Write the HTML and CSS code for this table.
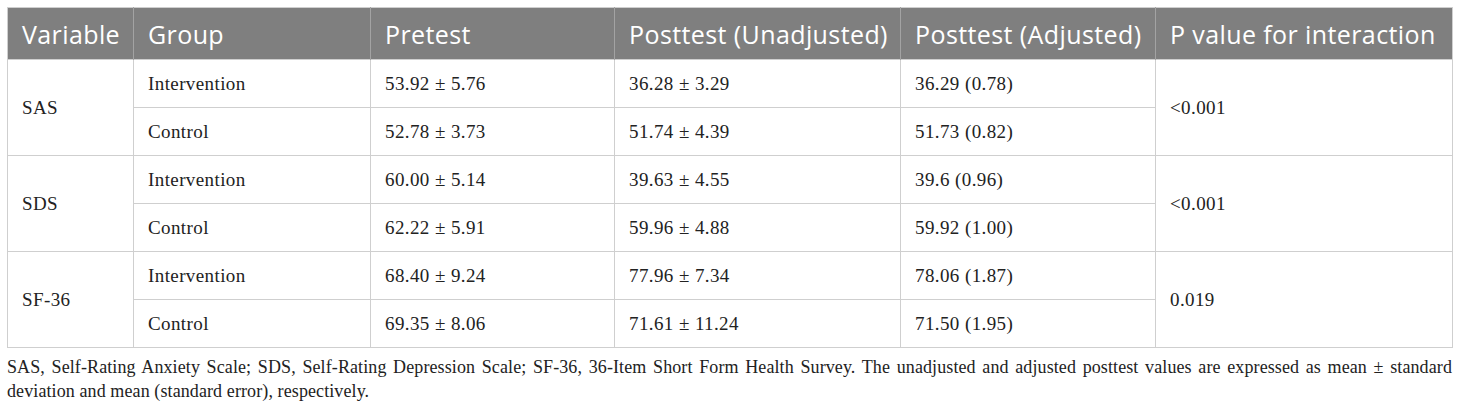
FILE: index.html
```html
<!DOCTYPE html>
<html>
<head>
<meta charset="utf-8">
<link rel="stylesheet" href="styles.css">
</head>
<body>
<div class="wrap">
<table class="data">
<colgroup>
<col class="c1"><col class="c2"><col class="c3"><col class="c4"><col class="c5"><col class="c6">
</colgroup>
<thead>
<tr><th>Variable</th><th>Group</th><th>Pretest</th><th>Posttest (Unadjusted)</th><th>Posttest (Adjusted)</th><th>P value for interaction</th></tr>
</thead>
<tbody>
<tr><td rowspan="2">SAS</td><td>Intervention</td><td>53.92 ± 5.76</td><td>36.28 ± 3.29</td><td>36.29 (0.78)</td><td rowspan="2">&lt;0.001</td></tr>
<tr><td>Control</td><td>52.78 ± 3.73</td><td>51.74 ± 4.39</td><td>51.73 (0.82)</td></tr>
<tr><td rowspan="2">SDS</td><td>Intervention</td><td>60.00 ± 5.14</td><td>39.63 ± 4.55</td><td>39.6 (0.96)</td><td rowspan="2">&lt;0.001</td></tr>
<tr><td>Control</td><td>62.22 ± 5.91</td><td>59.96 ± 4.88</td><td>59.92 (1.00)</td></tr>
<tr><td rowspan="2">SF-36</td><td>Intervention</td><td>68.40 ± 9.24</td><td>77.96 ± 7.34</td><td>78.06 (1.87)</td><td rowspan="2">0.019</td></tr>
<tr><td>Control</td><td>69.35 ± 8.06</td><td>71.61 ± 11.24</td><td>71.50 (1.95)</td></tr>
</tbody>
</table>
<p class="caption"><span class="line1">SAS, Self-Rating Anxiety Scale; SDS, Self-Rating Depression Scale; SF-36, 36-Item Short Form Health Survey. The unadjusted and adjusted posttest values are expressed as mean ± standard</span> deviation and mean (standard error), respectively.</p>
</div>
</body>
</html>
```

FILE: styles.css
```css
html, body {
  margin: 0;
  padding: 0;
  background: #ffffff;
}
.wrap {
  padding: 7px 8px 0 7px;
}
.data {
  width: 1445px;
  border-collapse: collapse;
  table-layout: fixed;
  border: 1px solid #cfcfcf;
}
.c1 { width: 126px; }
.c2 { width: 237px; }
.c3 { width: 244px; }
.c4 { width: 286px; }
.c5 { width: 255px; }
.c6 { width: 297px; }
.data th {
  background: #7f7f7f;
  color: #ffffff;
  font-family: "Open Sans", "Noto Sans", sans-serif;
  font-weight: 400;
  font-size: 25px;
  letter-spacing: 0.4px;
  text-align: left;
  height: 52px;
  padding: 0 0 0 14px;
  box-sizing: border-box;
  border-left: 1px solid #a3a3a3;
  white-space: nowrap;
}
.data th:first-child {
  border-left: none;
}
.data td {
  font-family: "Liberation Serif", "Times New Roman", serif;
  font-size: 19px;
  letter-spacing: 0.4px;
  color: #222222;
  height: 48px;
  padding: 0 0 0 14px;
  box-sizing: border-box;
  vertical-align: middle;
  border: 1px solid #cfcfcf;
  white-space: nowrap;
}
.caption {
  margin: 7px 0 0 0;
  font-family: "Liberation Serif", "Times New Roman", serif;
  font-size: 18px;
  letter-spacing: 0.1px;
  line-height: 24px;
  color: #222222;
  width: 1445px;
}
.line1 {
  display: block;
  text-align: justify;
  text-align-last: justify;
  white-space: nowrap;
}
```
